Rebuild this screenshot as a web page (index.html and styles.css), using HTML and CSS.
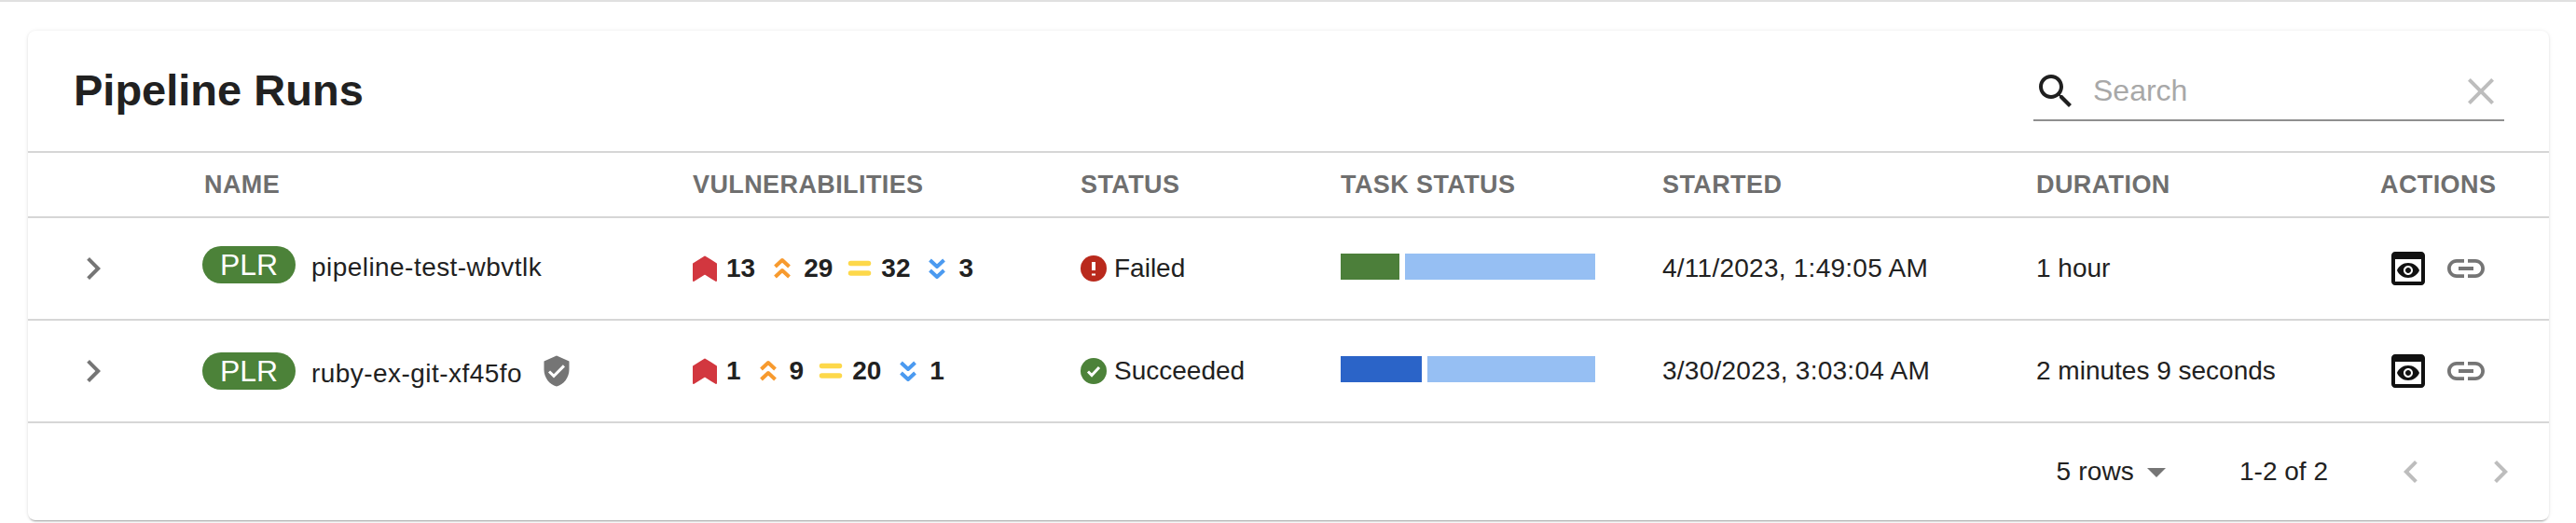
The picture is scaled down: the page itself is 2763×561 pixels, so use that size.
FILE: index.html
```html
<!DOCTYPE html>
<html lang="en">
<head>
    <meta charset="UTF-8">
    <meta name="viewport" content="width=device-width, initial-scale=1.0">
    <title>Pipeline Runs</title>
    <link rel="stylesheet" href="styles.css">
</head>
<body>
    <div class="card">
        <div class="toolbar">
            <h1>Pipeline Runs</h1>
            <div class="search">
                <svg class="icon search-icon" viewBox="0 0 24 24"><path d="M15.5 14h-.79l-.28-.27C15.41 12.59 16 11.11 16 9.5 16 5.91 13.09 3 9.5 3S3 5.91 3 9.5 5.91 16 9.5 16c1.61 0 3.09-.59 4.23-1.57l.27.28v.79l5 4.99L20.49 19l-4.99-5zm-6 0C7.01 14 5 11.99 5 9.5S7.01 5 9.5 5 14 7.01 14 9.5 11.99 14 9.5 14z"/></svg>
                <span class="search-text">Search</span>
                <svg class="icon clear-icon" viewBox="0 0 24 24"><path d="M19 6.41 17.59 5 12 10.59 6.41 5 5 6.41 10.59 12 5 17.59 6.41 19 12 13.41 17.59 19 19 17.59 13.41 12z"/></svg>
            </div>
        </div>
        <table>
            <colgroup>
                <col class="col-expand">
                <col class="col-name">
                <col class="col-vuln">
                <col class="col-status">
                <col class="col-task">
                <col class="col-started">
                <col class="col-duration">
                <col class="col-actions">
            </colgroup>
            <thead>
                <tr>
                    <th></th>
                    <th>Name</th>
                    <th>Vulnerabilities</th>
                    <th>Status</th>
                    <th>Task Status</th>
                    <th>Started</th>
                    <th>Duration</th>
                    <th>Actions</th>
                </tr>
            </thead>
            <tbody>
                <tr>
                    <td><svg class="icon chevron" viewBox="0 0 24 24"><path d="M10 6 8.59 7.41 13.17 12l-4.58 4.59L10 18l6-6z"/></svg></td>
                    <td>
                        <div class="name-cell raised">
                            <span class="pill">PLR</span>
                            <span class="run-name">pipeline-test-wbvtlk</span>
                        </div>
                    </td>
                    <td>
                        <div class="vulns">
                            <svg class="sev" viewBox="0 0 26 28"><path class="sev-critical" d="M13 1.500 25 9v18l-12-7.500L1 27V9z"/></svg><b>13</b>
                            <svg class="sev" viewBox="0 0 26 28"><path class="sev-high" d="M5.500 12 13 5l7.500 7M5.500 23 13 16l7.500 7"/></svg><b>29</b>
                            <svg class="sev" viewBox="0 0 26 28"><path class="sev-medium" d="M3.500 8.500h19M3.500 19h19"/></svg><b>32</b>
                            <svg class="sev" viewBox="0 0 26 28"><path class="sev-low" d="M5.500 5 13 12l7.500-7M5.500 16 13 23l7.500-7"/></svg><b>3</b>
                        </div>
                    </td>
                    <td>
                        <div class="status">
                            <svg class="status-icon" viewBox="0 0 28 28"><circle class="failed" cx="14" cy="14" r="14"/><path class="mark-bar" d="M14 7v9M14 19.500v2"/></svg>
                            Failed
                        </div>
                    </td>
                    <td>
                        <div class="task-bar">
                            <span class="seg seg-green"></span>
                            <span class="seg seg-light"></span>
                        </div>
                    </td>
                    <td class="date">4/11/2023, 1:49:05 AM</td>
                    <td>1 hour</td>
                    <td>
                        <div class="actions">
                            <svg class="icon preview" viewBox="0 0 24 24"><path d="M19 3H5c-1.110 0-2 .9-2 2v14c0 1.100.89 2 2 2h14c1.100 0 2-.9 2-2V5c0-1.100-.89-2-2-2zm0 16H5V7h14v12zm-5.500-6c0 .83-.67 1.500-1.500 1.500s-1.500-.67-1.500-1.500.67-1.500 1.500-1.500 1.500.67 1.500 1.500zM12 9c-2.730 0-5.060 1.660-6 4 .94 2.340 3.270 4 6 4s5.060-1.660 6-4c-.94-2.340-3.270-4-6-4zm0 6.500c-1.380 0-2.500-1.120-2.500-2.500s1.120-2.500 2.500-2.500 2.500 1.120 2.500 2.500-1.120 2.500-2.500 2.500z"/></svg>
                            <svg class="icon link" viewBox="0 0 24 24"><path d="M3.900 12c0-1.710 1.390-3.100 3.100-3.100h4V7H7c-2.760 0-5 2.240-5 5s2.240 5 5 5h4v-1.900H7c-1.710 0-3.100-1.390-3.100-3.100zM8 13h8v-2H8v2zm9-6h-4v1.900h4c1.710 0 3.100 1.390 3.100 3.100s-1.390 3.100-3.100 3.100h-4V17h4c2.760 0 5-2.240 5-5s-2.240-5-5-5z"/></svg>
                        </div>
                    </td>
                </tr>
                <tr>
                    <td><svg class="icon chevron" viewBox="0 0 24 24"><path d="M10 6 8.59 7.41 13.17 12l-4.58 4.59L10 18l6-6z"/></svg></td>
                    <td>
                        <div class="name-cell">
                            <span class="pill">PLR</span>
                            <span class="run-name">ruby-ex-git-xf45fo</span>
                            <svg class="shield" viewBox="0 0 24 24"><path d="M12 1 3 5v6c0 5.550 3.840 10.740 9 12 5.160-1.260 9-6.450 9-12V5l-9-4zm-2 16-4-4 1.410-1.410L10 14.170l6.590-6.590L18 9l-8 8z"/></svg>
                        </div>
                    </td>
                    <td>
                        <div class="vulns">
                            <svg class="sev" viewBox="0 0 26 28"><path class="sev-critical" d="M13 1.500 25 9v18l-12-7.500L1 27V9z"/></svg><b>1</b>
                            <svg class="sev" viewBox="0 0 26 28"><path class="sev-high" d="M5.500 12 13 5l7.500 7M5.500 23 13 16l7.500 7"/></svg><b>9</b>
                            <svg class="sev" viewBox="0 0 26 28"><path class="sev-medium" d="M3.500 8.500h19M3.500 19h19"/></svg><b>20</b>
                            <svg class="sev" viewBox="0 0 26 28"><path class="sev-low" d="M5.500 5 13 12l7.500-7M5.500 16 13 23l7.500-7"/></svg><b>1</b>
                        </div>
                    </td>
                    <td>
                        <div class="status">
                            <svg class="status-icon" viewBox="0 0 28 28"><circle class="succeeded" cx="14" cy="14" r="14"/><path class="mark-check" d="M8 14.500l4 4 8-8.500"/></svg>
                            Succeeded
                        </div>
                    </td>
                    <td>
                        <div class="task-bar">
                            <span class="seg seg-blue"></span>
                            <span class="seg seg-light"></span>
                        </div>
                    </td>
                    <td class="date">3/30/2023, 3:03:04 AM</td>
                    <td>2 minutes 9 seconds</td>
                    <td>
                        <div class="actions">
                            <svg class="icon preview" viewBox="0 0 24 24"><path d="M19 3H5c-1.110 0-2 .9-2 2v14c0 1.100.89 2 2 2h14c1.100 0 2-.9 2-2V5c0-1.100-.89-2-2-2zm0 16H5V7h14v12zm-5.500-6c0 .83-.67 1.500-1.500 1.500s-1.500-.67-1.500-1.500.67-1.500 1.500-1.500 1.500.67 1.500 1.500zM12 9c-2.730 0-5.060 1.660-6 4 .94 2.340 3.270 4 6 4s5.060-1.660 6-4c-.94-2.340-3.270-4-6-4zm0 6.500c-1.380 0-2.500-1.120-2.500-2.500s1.120-2.500 2.500-2.500 2.500 1.120 2.500 2.500-1.120 2.500-2.500 2.500z"/></svg>
                            <svg class="icon link" viewBox="0 0 24 24"><path d="M3.900 12c0-1.710 1.390-3.100 3.100-3.100h4V7H7c-2.760 0-5 2.240-5 5s2.240 5 5 5h4v-1.900H7c-1.710 0-3.100-1.390-3.100-3.100zM8 13h8v-2H8v2zm9-6h-4v1.900h4c1.710 0 3.100 1.390 3.100 3.100s-1.390 3.100-3.100 3.100h-4V17h4c2.760 0 5-2.240 5-5s-2.240-5-5-5z"/></svg>
                        </div>
                    </td>
                </tr>
            </tbody>
        </table>
        <div class="footer">
            <span class="page-size">5 rows</span>
            <svg class="icon arrow" viewBox="0 0 24 24"><path d="m7 10 5 5 5-5z"/></svg>
            <span class="page-count">1-2 of 2</span>
            <svg class="icon page-prev" viewBox="0 0 24 24"><path d="M15.410 7.410 14 6l-6 6 6 6 1.410-1.410L10.830 12z"/></svg>
            <svg class="icon page-next" viewBox="0 0 24 24"><path d="M10 6 8.590 7.410 13.170 12l-4.580 4.590L10 18l6-6z"/></svg>
        </div>
    </div>
</body>
</html>
```

FILE: styles.css
```css
html, body {
    height: 100%;
}
body {
    font-family: "Liberation Sans", Arial, sans-serif;
    font-size: 28px;
    color: #212121;
    margin: 0;
    padding: 31px 29px 0 30px;
    box-sizing: border-box;
    background-color: #fff;
    border-top: 2px solid #e0e0e0;
    overflow: hidden;
}
.card {
    height: 525px;
    background-color: #fff;
    border-radius: 8px;
    box-shadow: 0 3px 2px -2px rgba(0, 0, 0, 0.3), 0 1px 3px rgba(0, 0, 0, 0.1), 0 0 5px rgba(0, 0, 0, 0.06);
}
.icon {
    width: 48px;
    height: 48px;
    flex: none;
    display: block;
}

/* title and search */
.toolbar {
    height: 131px;
    box-sizing: border-box;
    display: flex;
    justify-content: space-between;
    align-items: flex-start;
    padding: 0 48px 0 49px;
    border-bottom: 2px solid #d6d6d6;
}
h1 {
    margin: 40px 0 0;
    font-size: 47px;
    line-height: 48px;
    font-weight: bold;
}
.search {
    width: 505px;
    height: 54px;
    margin-top: 41px;
    display: flex;
    align-items: flex-start;
    border-bottom: 2px solid #8f8f8f;
}
.search-text {
    flex: 1;
    margin-left: 16px;
    font-size: 32px;
    line-height: 46px;
    color: #a8a8a8;
}
.search-icon {
    fill: #1f1f1f;
}
.clear-icon {
    fill: #bdbdbd;
    margin-right: 1px;
}

/* table */
table {
    width: 100%;
    table-layout: fixed;
    border-collapse: separate;
    border-spacing: 0;
}
.col-expand { width: 189px; }
.col-name { width: 524px; }
.col-vuln { width: 416px; }
.col-status { width: 279px; }
.col-task { width: 345px; }
.col-started { width: 401px; }
.col-duration { width: 369px; }
.col-actions { width: 181px; }
th, td {
    box-sizing: border-box;
    padding: 0;
    text-align: left;
    border-bottom: 2px solid #d6d6d6;
}
th {
    height: 70px;
    font-size: 27px;
    letter-spacing: 0.4px;
    text-transform: uppercase;
    color: #6f6f6f;
}
td {
    height: 110px;
}
.date {
    letter-spacing: 0.25px;
}
.chevron {
    fill: #757575;
    margin-left: 46px;
}
.name-cell {
    display: flex;
    align-items: center;
}
.name-cell.raised {
    padding-bottom: 8px;
}
.pill {
    width: 100px;
    height: 40px;
    margin-left: -2px;
    border-radius: 20px;
    background-color: #4c8239;
    color: #fff;
    font-size: 32px;
    line-height: 40px;
    text-align: center;
}
.run-name {
    margin-left: 17px;
    padding-top: 6px;
    letter-spacing: 0.45px;
}
.shield {
    width: 36px;
    height: 36px;
    margin-left: 19px;
    fill: #757575;
}

/* severity counts */
.vulns {
    display: flex;
    align-items: center;
}
.vulns b {
    font-size: 28px;
    margin-left: 10px;
    margin-right: 16px;
}
.sev {
    width: 26px;
    height: 28px;
    flex: none;
    fill: none;
    stroke-linejoin: round;
}
.sev-critical {
    fill: #d2373f;
    stroke: #d2373f;
    stroke-width: 2;
}
.sev-high {
    stroke: #f79a2e;
    stroke-width: 4;
}
.sev-medium {
    stroke: #fdd84a;
    stroke-width: 5.5;
    stroke-linecap: round;
}
.sev-low {
    stroke: #4b9af0;
    stroke-width: 4;
}

.status {
    display: flex;
    align-items: center;
    gap: 8px;
}
.status-icon {
    width: 28px;
    height: 28px;
    flex: none;
}
.failed { fill: #b9291c; }
.succeeded { fill: #4c8239; }
.mark-bar {
    stroke: #fff;
    stroke-width: 4;
    fill: none;
}
.mark-check {
    stroke: #fff;
    stroke-width: 3;
    fill: none;
}

/* task bar, two segments */
.task-bar {
    width: 273px;
    height: 28px;
    margin-bottom: 4px;
    display: flex;
    gap: 6px;
}
.seg {
    display: block;
}
.seg-green {
    width: 63px;
    background-color: #4c7f3a;
}
.seg-blue {
    width: 87px;
    background-color: #2b64c8;
}
.seg-light {
    flex: 1;
    background-color: #96bff3;
}

.actions {
    display: flex;
    align-items: center;
    gap: 14px;
    margin-left: 6px;
}
.preview { fill: #111; }
.link { fill: #757575; }

/* pagination */
.footer {
    height: 104px;
    display: flex;
    align-items: center;
    justify-content: flex-end;
    padding-right: 28px;
}
.page-size {
    letter-spacing: 0.2px;
}
.arrow {
    fill: #757575;
}
.page-count {
    margin-left: 65px;
    margin-right: 65px;
}
.page-prev, .page-next {
    fill: #bdbdbd;
}
.page-next {
    margin-left: 48px;
}
```
